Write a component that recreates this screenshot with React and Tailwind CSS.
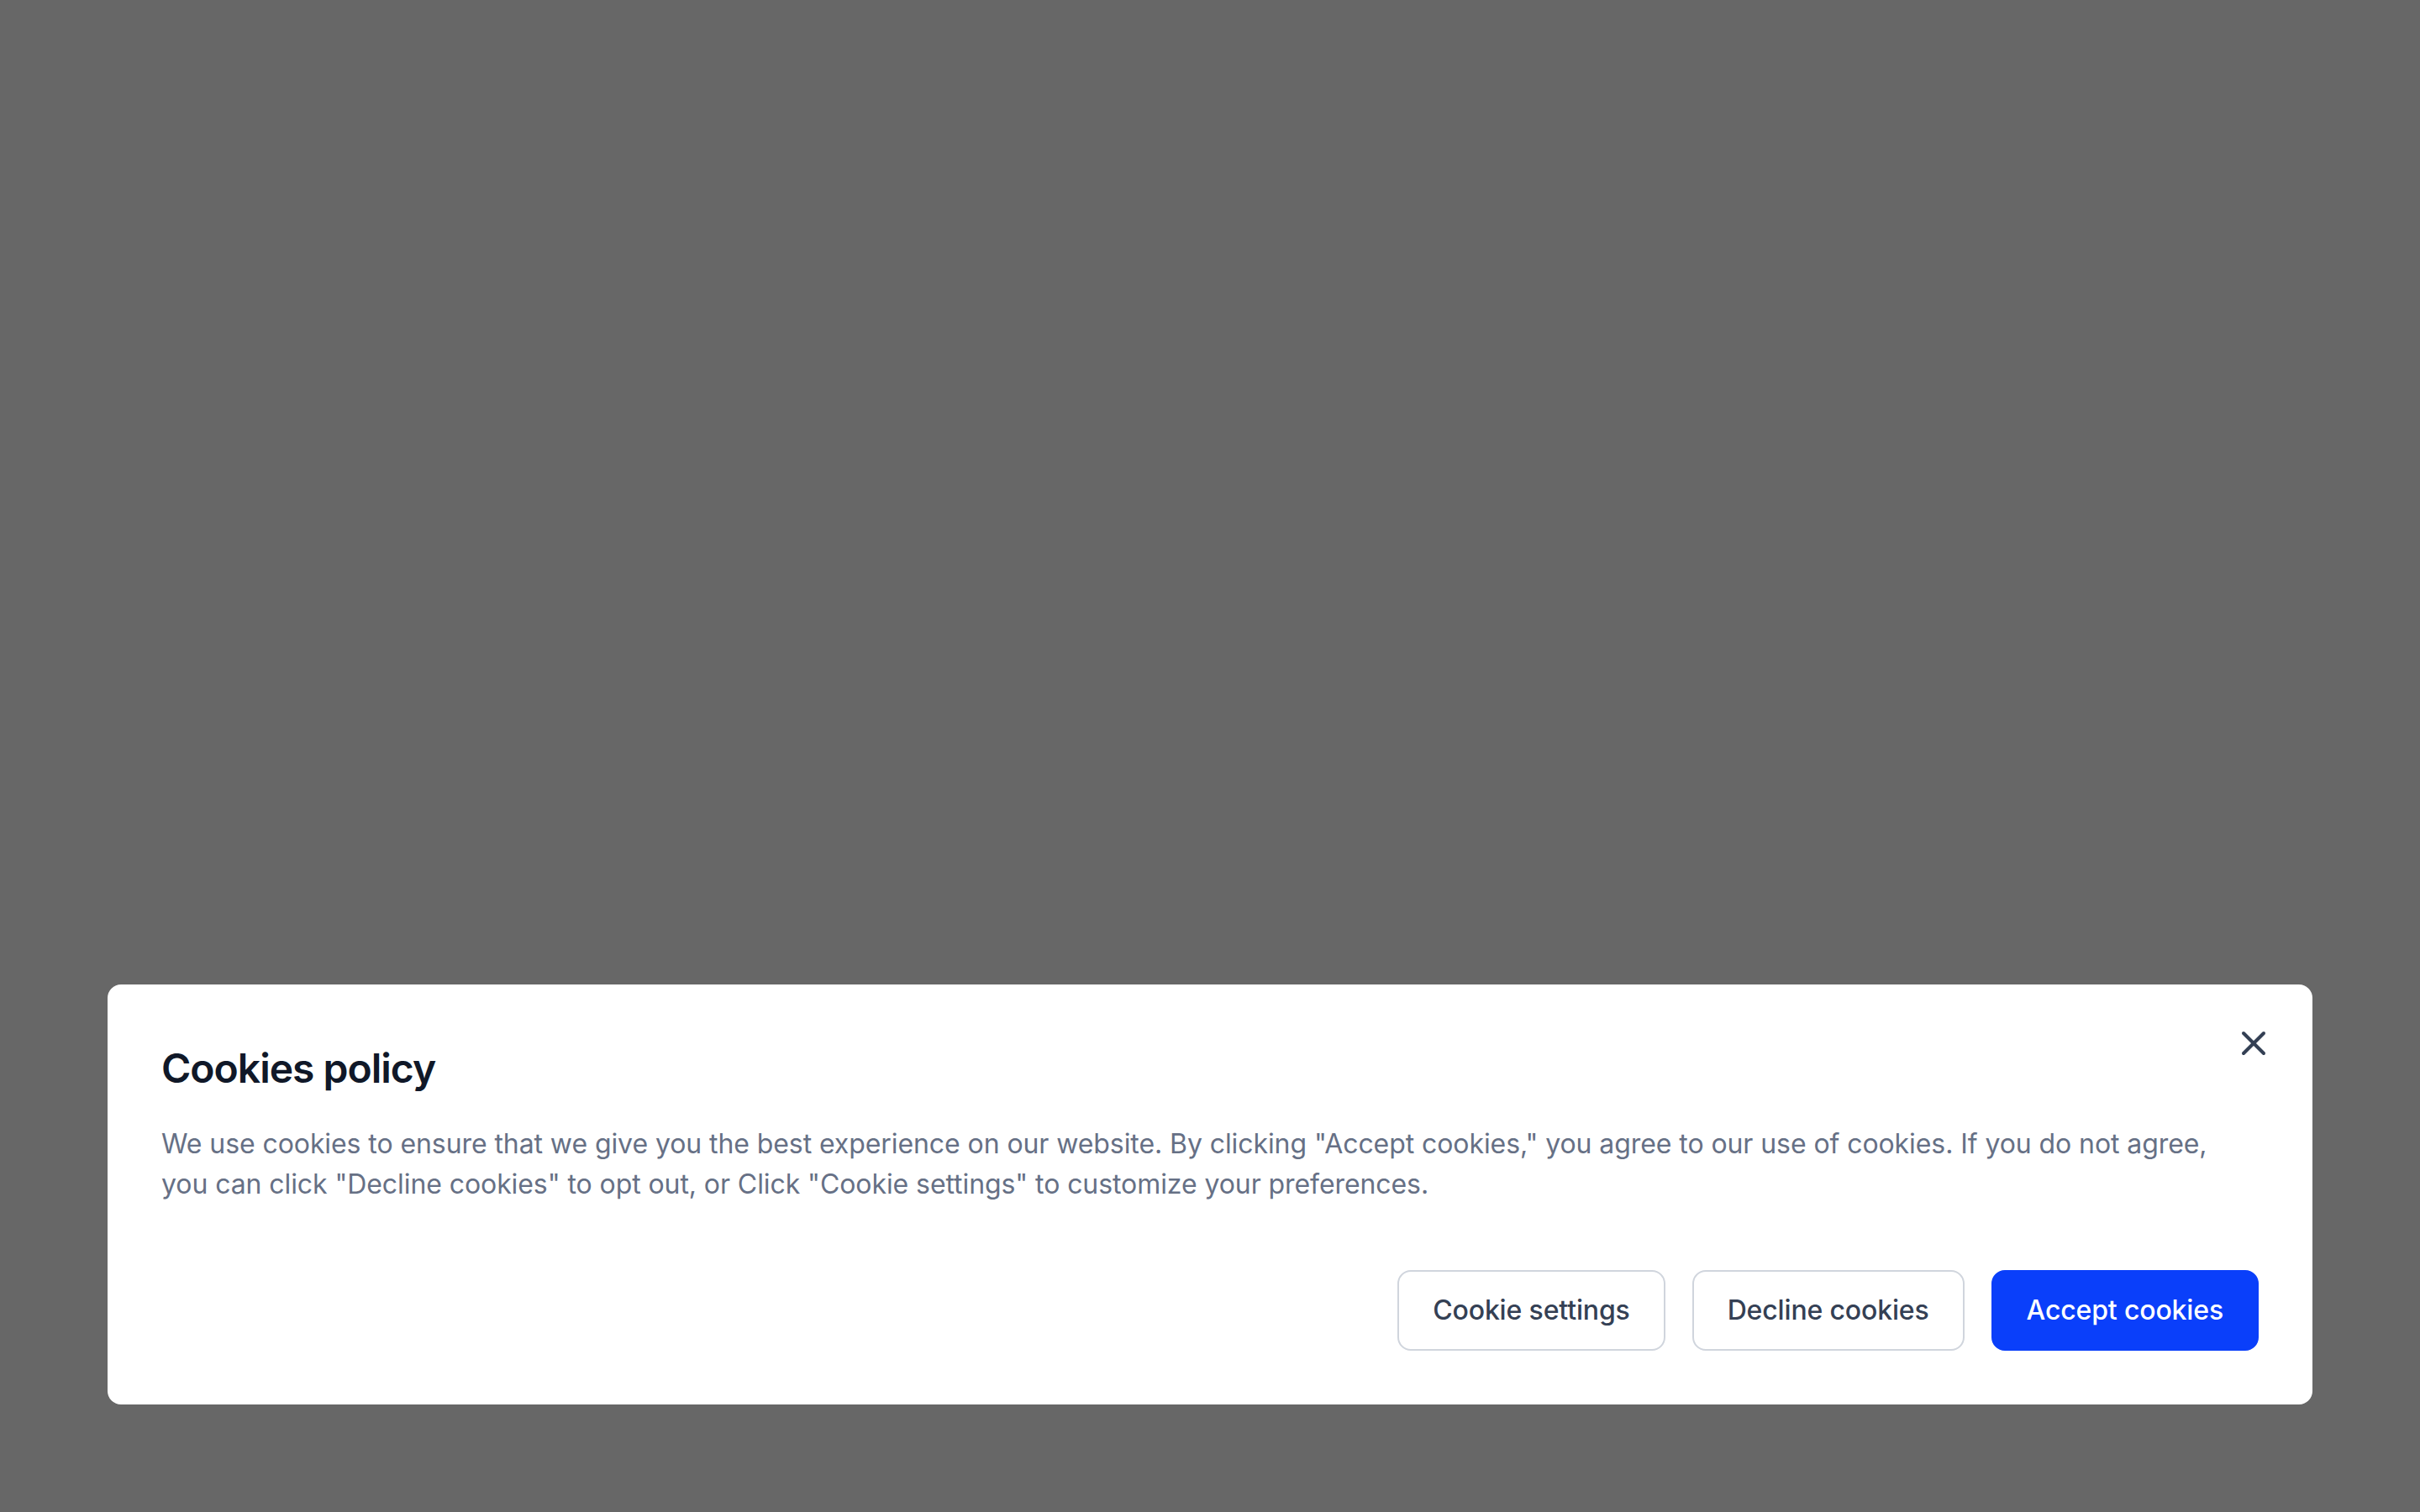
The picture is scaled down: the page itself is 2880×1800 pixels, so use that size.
import { X } from "lucide-react";

const BUTTONS = [
  { label: "Cookie settings", primary: false },
  { label: "Decline cookies", primary: false },
  { label: "Accept cookies", primary: true },
];

export default function App() {
  return (
    <div className="flex min-h-screen flex-col justify-end bg-[#676767] p-[128px] font-['Inter',sans-serif]">
      <div className="relative rounded-[16px] bg-white p-[64px]">
        <button className="absolute right-[46px] top-[46px] text-[#344054]">
          <X size={48} strokeWidth={2} />
        </button>
        <h2 className="pt-[4px] text-[48px] font-semibold leading-[64px] tracking-[-1px] text-[#101828]">
          Cookies policy
        </h2>
        <p className="mt-[34px] text-[32px] leading-[48px] tracking-[-0.08px] text-[#667085]">
          We use cookies to ensure that we give you the best experience on our website. By clicking "Accept cookies," you
          agree to our use of cookies. If you do not agree, you can click "Decline cookies" to opt out, or Click "Cookie
          settings" to customize your preferences.
        </p>
        <div className="mt-[78px] flex justify-end gap-[32px]">
          {BUTTONS.map((btn) => (
            <button
              key={btn.label}
              className={
                btn.primary
                  ? "rounded-[16px] border-2 border-[#0a3ffa] bg-[#0a3ffa] px-[40px] py-[22px] text-[32px] font-medium leading-[48px] tracking-[-0.15px] text-white"
                  : "rounded-[16px] border-2 border-[#d0d5dd] bg-white px-[40px] py-[22px] text-[32px] font-medium leading-[48px] tracking-[-0.15px] text-[#344054]"
              }
            >
              {btn.label}
            </button>
          ))}
        </div>
      </div>
    </div>
  );
}
